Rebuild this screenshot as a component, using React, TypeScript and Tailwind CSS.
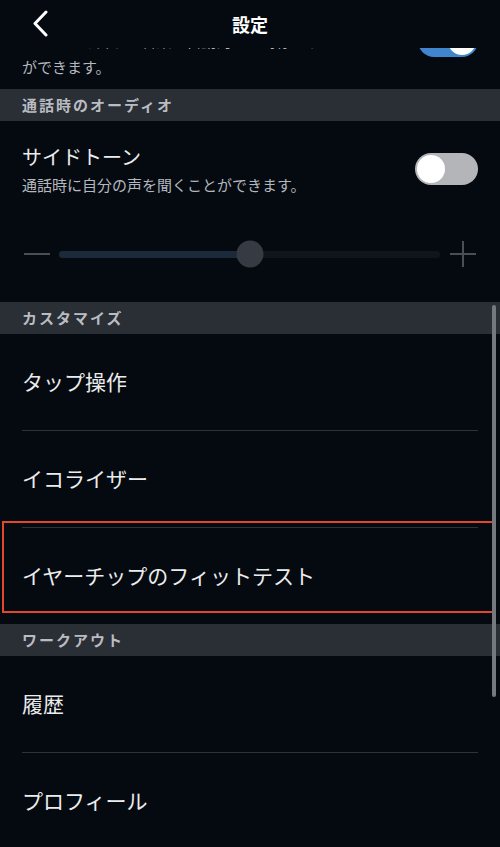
import React from "react";

const SectionHeader = ({ title }: { title: string }) => (
    <div className="h-8 bg-[#2a2e35] flex items-center px-[22px]">
        <span className="text-[15px] font-bold tracking-[2px] text-[#b9bcc1]">{title}</span>
    </div>
);

const Row = ({ label, divider = true, children }: { label: string; divider?: boolean; children?: React.ReactNode }) => (
    <div className="relative">
        <div className="h-[96px] flex items-center px-[22px]">
            <span className="text-[21px] text-[#ececec]">{label}</span>
        </div>
        {divider && <div className="mx-[22px] h-px bg-[#2e333a]" />}
        {children}
    </div>
);

export default function App() {
    return (
        <div
            className="relative w-[500px] h-[847px] overflow-hidden bg-[#050a11]"
            style={{ fontFamily: '"Noto Sans CJK JP", "Noto Sans", sans-serif' }}
        >
            {/* header */}
            <div className="h-12 grid grid-cols-[1fr_auto_1fr] items-center">
                <div className="pl-[31px]">
                    <svg width="20" height="28" viewBox="0 0 20 28" fill="none">
                        <path d="M15 2 L4 13.5 L15 25" stroke="#ffffff" strokeWidth="3" strokeLinecap="round" strokeLinejoin="round" />
                    </svg>
                </div>
                <span className="text-[18px] font-bold text-white">設定</span>
                <div />
            </div>

            {/* previous row, scrolled under the header */}
            <div className="h-[41px] overflow-hidden flex items-end justify-between px-[22px]">
                <div className="mb-[11px] text-[15px] leading-[22px] text-[#b4b8be]">
                    <div className="mb-[4px]">イヤホンを外すと音楽が自動的に一時停止すること</div>
                    <div>ができます。</div>
                </div>
                <div className="mb-[32px] shrink-0 w-[60px] h-[32px] rounded-full bg-[#3f86cf] flex items-center justify-end px-[2px]">
                    <div className="w-[28px] h-[28px] rounded-full bg-white" />
                </div>
            </div>

            <SectionHeader title="通話時のオーディオ" />

            {/* sidetone */}
            <div className="pt-[22px] pb-[34px]">
                <div className="flex items-start justify-between px-[22px]">
                    <div>
                        <div className="text-[20px] leading-[28px] text-[#ececec]">サイドトーン</div>
                        <div className="mt-[3px] text-[15px] leading-[22px] text-[#b4b8be]">通話時に自分の声を聞くことができます。</div>
                    </div>
                    <div className="mt-[10px] w-[63px] h-[32px] rounded-full bg-[#b3b5b9] flex items-center px-[2px]">
                        <div className="w-[28px] h-[28px] rounded-full bg-white" />
                    </div>
                </div>
                <div className="mt-[44px] h-7 flex items-center px-[24px] gap-[9px]">
                    <div className="w-[26px] h-[2px] bg-[#4a4f57]" />
                    <div className="relative flex-1 h-[7px] rounded-full bg-[#10151c]">
                        <div className="h-full w-1/2 rounded-full bg-[#1a2a3a]" />
                        <div className="absolute left-1/2 top-1/2 -translate-x-1/2 -translate-y-1/2 w-[27px] h-[27px] rounded-full bg-[#363b43]" />
                    </div>
                    <div className="ml-[1px] relative w-[26px] h-[28px] flex items-center justify-center">
                        <div className="absolute w-[26px] h-[2px] bg-[#4a4f57]" />
                        <div className="absolute w-[2px] h-[26px] bg-[#4a4f57]" />
                    </div>
                </div>
            </div>

            <SectionHeader title="カスタマイズ" />
            <Row label="タップ操作" />
            <Row label="イコライザー" />
            <Row label="イヤーチップのフィットテスト" divider={false}>
                <div className="absolute left-[2px] top-[-7px] w-[492px] h-[92px] border-2 border-[#e2472d]" />
            </Row>

            <SectionHeader title="ワークアウト" />
            <Row label="履歴" />
            <Row label="プロフィール" divider={false} />

            {/* scroll indicator */}
            <div className="absolute right-[4px] top-[305px] w-[4px] h-[392px] rounded-full bg-[#74787f]" />
        </div>
    );
}
